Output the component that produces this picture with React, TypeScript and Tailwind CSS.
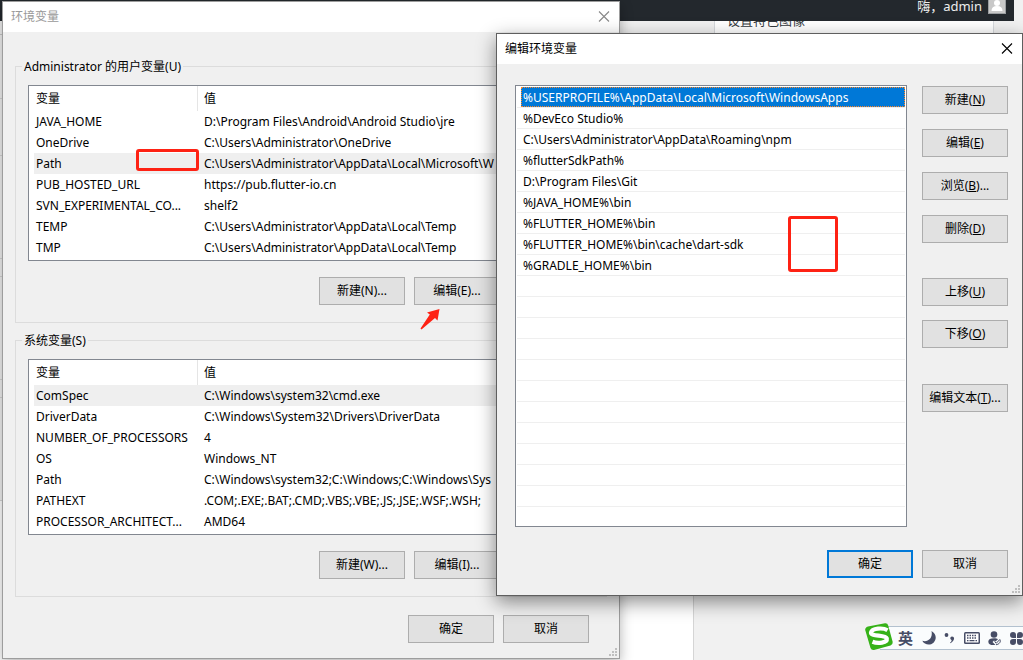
import type { ReactNode } from "react";

type Variable = { name: string; value: string };

const userVariables: Variable[] = [
  { name: "JAVA_HOME", value: "D:\\Program Files\\Android\\Android Studio\\jre" },
  { name: "OneDrive", value: "C:\\Users\\Administrator\\OneDrive" },
  { name: "Path", value: "C:\\Users\\Administrator\\AppData\\Local\\Microsoft\\W" },
  { name: "PUB_HOSTED_URL", value: "https://pub.flutter-io.cn" },
  { name: "SVN_EXPERIMENTAL_CO...", value: "shelf2" },
  { name: "TEMP", value: "C:\\Users\\Administrator\\AppData\\Local\\Temp" },
  { name: "TMP", value: "C:\\Users\\Administrator\\AppData\\Local\\Temp" },
];

const systemVariables: Variable[] = [
  { name: "ComSpec", value: "C:\\Windows\\system32\\cmd.exe" },
  { name: "DriverData", value: "C:\\Windows\\System32\\Drivers\\DriverData" },
  { name: "NUMBER_OF_PROCESSORS", value: "4" },
  { name: "OS", value: "Windows_NT" },
  { name: "Path", value: "C:\\Windows\\system32;C:\\Windows;C:\\Windows\\Sys" },
  { name: "PATHEXT", value: ".COM;.EXE;.BAT;.CMD;.VBS;.VBE;.JS;.JSE;.WSF;.WSH;" },
  { name: "PROCESSOR_ARCHITECT...", value: "AMD64" },
];

const paths = [
  "%USERPROFILE%\\AppData\\Local\\Microsoft\\WindowsApps",
  "%DevEco Studio%",
  "C:\\Users\\Administrator\\AppData\\Roaming\\npm",
  "%flutterSdkPath%",
  "D:\\Program Files\\Git",
  "%JAVA_HOME%\\bin",
  "%FLUTTER_HOME%\\bin",
  "%FLUTTER_HOME%\\bin\\cache\\dart-sdk",
  "%GRADLE_HOME%\\bin",
];
const blankRows = Array.from({ length: 11 }, (_, i) => i);

function PushButton({ children, primary = false }: { children: ReactNode; primary?: boolean }) {
  return (
    <button
      type="button"
      className={
        primary
          ? "h-7 w-[86px] shrink-0 border-2 border-[#0078d7] bg-[#e1e1e1] whitespace-nowrap"
          : "h-7 w-[86px] shrink-0 border border-[#adadad] bg-[#e1e1e1] whitespace-nowrap"
      }
    >
      {children}
    </button>
  );
}

function TitleBar({ title, active = false }: { title: string; active?: boolean }) {
  return (
    <header className="flex h-[30px] items-center justify-between bg-white pl-2 pr-2">
      <h2 className={active ? "text-black" : "text-[#999999]"}>{title}</h2>
      <button type="button" aria-label="关闭" className={active ? "text-black" : "text-[#888888]"}>
        <svg width="14" height="14" viewBox="0 0 14 14" stroke="currentColor" fill="none">
          <path d="M2 1.500l10 10M12 1.500L2 11.500" strokeWidth="1.1" />
        </svg>
      </button>
    </header>
  );
}

function ResizeGrip() {
  return (
    <svg width="8" height="8" viewBox="0 0 8 8" fill="#bfbfbf" className="absolute bottom-0.5 right-0.5">
      <path d="M6 0h2v2H6zM3 3h2v2H3zM6 3h2v2H6zM0 6h2v2H0zM3 6h2v2H3zM6 6h2v2H6z" />
    </svg>
  );
}

function VariableTable({ rows, selected, label }: { rows: Variable[]; selected: string; label: string }) {
  return (
    <div className="overflow-hidden border border-[#828790] bg-white pb-0.5 pl-[5px]">
      <table aria-label={label} className="w-full table-fixed border-separate border-spacing-0 text-left">
        <thead>
          <tr className="h-[25px]">
            <th className="w-[164px] border-r border-[#e5e5e5] p-0 pl-0.5 font-normal">变量</th>
            <th className="p-0 pl-1.5 font-normal">值</th>
          </tr>
        </thead>
        <tbody>
          {rows.map((row) => (
            <tr key={row.name} className={row.name === selected ? "h-[21px] bg-[#efefef]" : "h-[21px]"}>
              <td className="whitespace-nowrap p-0 pl-0.5 leading-5">{row.name}</td>
              <td className="overflow-hidden whitespace-nowrap p-0 pl-1.5 leading-5">{row.value}</td>
            </tr>
          ))}
        </tbody>
      </table>
    </div>
  );
}

type GroupProps = {
  legend: string;
  rows: Variable[];
  selected: string;
  actions: string[];
};

function VariableGroup({ legend, rows, selected, actions }: GroupProps) {
  return (
    <fieldset className="min-w-0 border border-[#dcdcdc] pb-[17px] pl-3 pr-[11px]">
      <legend className="-ml-1.5 h-[18px] px-0.5 leading-5">{legend}</legend>
      <div className="pt-2.5">
        <VariableTable rows={rows} selected={selected} label={legend} />
      </div>
      <div className="flex justify-end gap-[9px] pt-4">
        {actions.map((action) => (
          <PushButton key={action}>{action}</PushButton>
        ))}
      </div>
    </fieldset>
  );
}

function VariablesWindow() {
  return (
    <section
      aria-label="环境变量"
      className="absolute left-0.5 top-px w-[618px] border border-[#9d9d9d] bg-[#f0f0f0] shadow-[0_4px_12px_rgba(0,0,0,0.3)]"
    >
      <TitleBar title="环境变量" />
      <div className="flex flex-col gap-2 px-3 pt-[25px]">
        <VariableGroup
          legend="Administrator 的用户变量(U)"
          rows={userVariables}
          selected="Path"
          actions={["新建(N)...", "编辑(E)...", "删除(D)"]}
        />
        <VariableGroup
          legend="系统变量(S)"
          rows={systemVariables}
          selected="ComSpec"
          actions={["新建(W)...", "编辑(I)...", "删除(L)"]}
        />
      </div>
      <footer className="flex justify-end gap-[9px] pb-[15px] pr-[30px] pt-[18px]">
        <PushButton>确定</PushButton>
        <PushButton>取消</PushButton>
      </footer>
      <ResizeGrip />
      <div className="absolute left-[133px] top-[147px] h-[22px] w-[63px] rounded-[3px] border-3 border-[#fe2214]" />
      <svg width="20" height="22" viewBox="0 0 20 22" fill="#fe2214" className="absolute left-[417px] top-[306px]">
        <path d="M19.5 1L17.5 12.5L15 10L1.500 21.500L.5 20.500L9.800 6.500L7 4.500z" />
      </svg>
    </section>
  );
}

function EditWindow() {
  return (
    <section
      aria-label="编辑环境变量"
      className="absolute left-[496px] top-[33px] w-[527px] border border-[#5f5f5f] bg-[#f0f0f0] shadow-[0_6px_18px_rgba(0,0,0,0.45)]"
    >
      <TitleBar title="编辑环境变量" active />
      <div className="flex gap-[15px] pl-[18px] pr-3.5 pt-[21px]">
        <ul className="min-w-0 flex-1 border border-[#828790] bg-white px-px pb-[19px] pt-px">
          {paths.map((path, i) => (
            <li key={path} className="h-[21px] border-b border-[#efefef]">
              <div
                className={
                  i === 0
                    ? "ml-1 h-5 border border-dotted border-[#ff8728] bg-[#0078d7] pl-px leading-5 text-white"
                    : "ml-1 h-5 pl-0.5 leading-[22px]"
                }
              >
                {path}
              </div>
            </li>
          ))}
          {blankRows.map((n) => (
            <li key={n} className="h-[21px] border-b border-[#efefef]" />
          ))}
        </ul>
        <div className="flex flex-col gap-[15px] pt-px">
          <PushButton>新建(<u>N</u>)</PushButton>
          <PushButton>编辑(<u>E</u>)</PushButton>
          <PushButton>浏览(<u>B</u>)...</PushButton>
          <PushButton>删除(<u>D</u>)</PushButton>
          <div className="flex flex-col gap-3.5 pt-5">
            <PushButton>上移(<u>U</u>)</PushButton>
            <PushButton>下移(<u>O</u>)</PushButton>
          </div>
          <div className="pt-[21px]">
            <PushButton>编辑文本(<u>T</u>)...</PushButton>
          </div>
        </div>
      </div>
      <footer className="flex justify-end gap-[9px] pb-[17px] pr-3.5 pt-[23px]">
        <PushButton primary>确定</PushButton>
        <PushButton>取消</PushButton>
      </footer>
      <ResizeGrip />
      <div className="absolute left-[291px] top-[182px] h-14 w-[50px] rounded-[3px] border-3 border-[#fe2214]" />
    </section>
  );
}

function InputMethodBar() {
  return (
    <aside
      aria-label="输入法"
      className="absolute right-0 top-[626px] flex h-6 w-[143px] items-center border-y border-[#b3c1cf] bg-[#fafcfd] text-[#474d66]"
    >
      <svg width="28" height="28" viewBox="0 0 28 28" className="absolute -left-[15px] -top-1">
        <path d="M3 3.500L20 .3Q22.500 0 23.200 2.500L27.700 19Q28 21.500 25.500 22.500L9 27Q6.500 27.500 5.500 25L.2 7Q0 4.500 3 3.500z" fill="#36b218" />
        <path d="M22.500 7.200C18 4.500 7 5 6 9.500C5.500 13.800 20.500 11.500 21.800 15.500C22.500 19.800 13 21 7.500 18.800" fill="none" stroke="#fff" strokeWidth="4.200" />
      </svg>
      <div className="flex w-full items-center justify-between pl-[18px]">
        <span className="text-[15px] font-bold leading-5">英</span>
        <svg width="14" height="14" viewBox="0 0 14 14" fill="currentColor">
          <path d="M9.500 0C15 3 14.500 9 11.500 11.700C8 14.800 2.500 14 .3 9.800C6.500 11.500 11 7 9.500 0z" />
        </svg>
        <svg width="11" height="12" viewBox="0 0 11 12" fill="currentColor">
          <circle cx="2.500" cy="3" r="1.900" />
          <path d="M8 4.500c2.800 0 3.200 4-1.500 6.800l-.6-.6c1.700-1.100 1.800-2 1.600-2.800C5.700 7.500 6 4.500 8 4.500z" />
        </svg>
        <svg width="16" height="12" viewBox="0 0 16 12">
          <rect width="16" height="12" rx="1.500" fill="currentColor" />
          <rect x="1.500" y="1.500" width="13" height="9" fill="#fff" />
          <path d="M3 3.500h10M3 6h10" stroke="currentColor" strokeWidth="1.500" strokeDasharray="1.500 1" />
          <path d="M3 8.700h1.500M5.500 8.700h5M11.500 8.700H13" stroke="currentColor" strokeWidth="1.300" />
        </svg>
        <svg width="13" height="15" viewBox="0 0 13 15" fill="currentColor">
          <circle cx="6" cy="3.500" r="3.300" />
          <path d="M.3 10.500C.5 8 2.500 7.300 6 7.300c2 0 3 .3 4 1L7.500 10.500 6 9.500 4.500 11l3 3C3 14.500.3 13.500.3 10.500z" />
          <path d="M6.500 10.500l1.800 1.700L11.800 8.500c1.500 2-.5 5-3.800 5.200" fill="none" stroke="currentColor" />
        </svg>
        <svg width="13" height="13" viewBox="0 0 13 13" fill="currentColor">
          <path d="M0 3a3 3 0 0 1 6 0v3H3a3 3 0 0 1-3-3zM7 3a3 3 0 1 1 3 3H7zM0 10a3 3 0 0 1 3-3h3v3a3 3 0 0 1-6 0zM7 7h3a3 3 0 1 1-3 3z" />
        </svg>
      </div>
    </aside>
  );
}

function BackgroundPage() {
  return (
    <div className="flex h-screen bg-[#f1f1f1]">
      <div className="flex min-w-0 flex-1 flex-col">
        <div className="flex h-[21px] shrink-0 items-start justify-end gap-1.5 overflow-hidden bg-[#23282d] pr-2 text-[13px] leading-[13px] text-[#eeeeee]">
          <span>嗨，admin</span>
          <svg width="18" height="14" viewBox="0 0 18 14">
            <path d="M0-4h18v18H0z" fill="#9b9ea1" />
            <path d="M1-3h16v16H1z" fill="#c8c8c8" />
            <circle cx="9" cy="3" r="3" fill="#fff" />
            <path d="M3.500 11Q3.500 6 9 6t5.500 5z" fill="#fff" />
          </svg>
        </div>
        <div className="flex flex-1">
          <div className="flex w-[694px] flex-col">
            <div className="h-3.5 border-b border-[#c8c8c8]" />
            <div className="h-16 border-b border-[#d5d5d5]" />
            <div className="h-[57px] border-b border-[#d5d5d5]" />
            <div className="h-[103px] border-b border-[#d5d5d5]" />
            <div className="h-[18px] border-b border-[#d5d5d5]" />
            <div className="h-[103px] border-b border-[#d5d5d5]" />
            <div className="h-[18px] border-b border-[#d5d5d5]" />
            <div className="h-[103px] border-b border-[#d5d5d5]" />
            <div className="flex-1 border-r border-[#d5d5d5] bg-white" />
          </div>
          <div className="ml-5 mr-5 h-[180px] flex-1 overflow-hidden border-x border-[#d5d8dc] bg-white pl-3">
            <p className="-mt-2.5 text-[13px] leading-[18px] text-[#32373c]">设置特色图像</p>
          </div>
        </div>
      </div>
      <div className="w-[9px] bg-[#f1f1f1]" />
    </div>
  );
}

export default function App() {
  return (
    <main className="relative h-screen overflow-hidden font-['Noto_Sans','Noto_Sans_CJK_SC',sans-serif] text-[12px] leading-4 text-black">
      <BackgroundPage />
      <VariablesWindow />
      <EditWindow />
      <InputMethodBar />
    </main>
  );
}
